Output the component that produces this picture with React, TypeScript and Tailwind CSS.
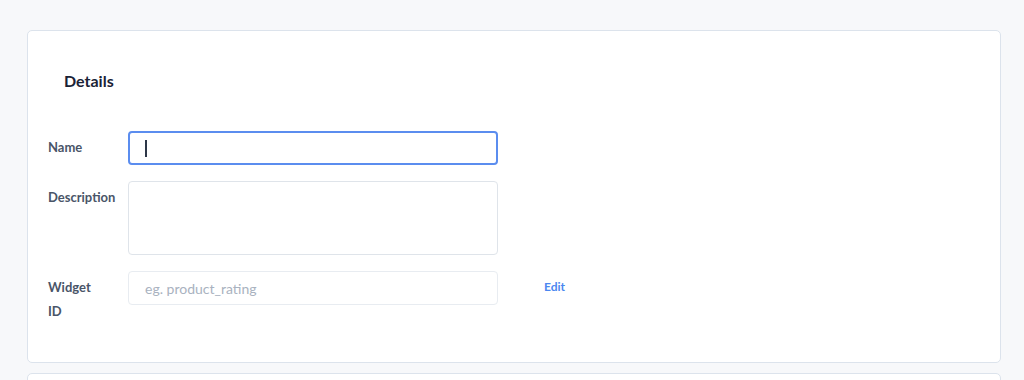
const font = { fontFamily: 'Lato, "Noto Sans", sans-serif' };

function Row({ label, children, extra }: { label: React.ReactNode; children: React.ReactNode; extra?: React.ReactNode }) {
  return (
    <div className="flex items-start">
      <div className="w-[70px] mr-[10px] pt-[4px] text-[13px] leading-[24px] font-bold text-[#4a5568]">{label}</div>
      <div className="w-[370px]">{children}</div>
      {extra}
    </div>
  );
}

export default function App() {
  return (
    <div className="h-screen overflow-hidden bg-[#f7f8fa] pt-[30px] pl-[27px] pr-[23px]" style={font}>
      <div className="bg-white border border-[#dce3ec] rounded-[5px] pt-[38px] pl-[20px] pb-[39px]">
        <h2 className="pl-[16px] text-[16px] leading-6 font-bold text-[#1a2236] mb-[38px]">Details</h2>
        <div className="flex flex-col gap-[16px]">
          <Row label="Name">
            <div className="h-[34px] rounded-[4px] border-2 border-[#5b8def] flex items-center pl-[15px]">
              <span className="w-[2px] h-[17px] bg-[#2d3748]" />
            </div>
          </Row>
          <Row label="Description">
            <textarea className="block w-full h-[74px] rounded-[4px] border border-[#dfe4ea] resize-none outline-none" />
          </Row>
          <Row
            label={<>Widget<br />ID</>}
            extra={<a className="ml-[46px] mt-[7px] text-[12px] font-bold text-[#4b87f0]">Edit</a>}
          >
            <input
              placeholder="eg. product_rating"
              className="block w-full h-[34px] rounded-[4px] border border-[#e8ecf1] px-[16px] text-[14px] placeholder-[#a9b2c0] outline-none"
            />
          </Row>
        </div>
      </div>
      <div className="mt-[10px] bg-white border border-[#dce3ec] rounded-[5px] h-[40px]" />
    </div>
  );
}
